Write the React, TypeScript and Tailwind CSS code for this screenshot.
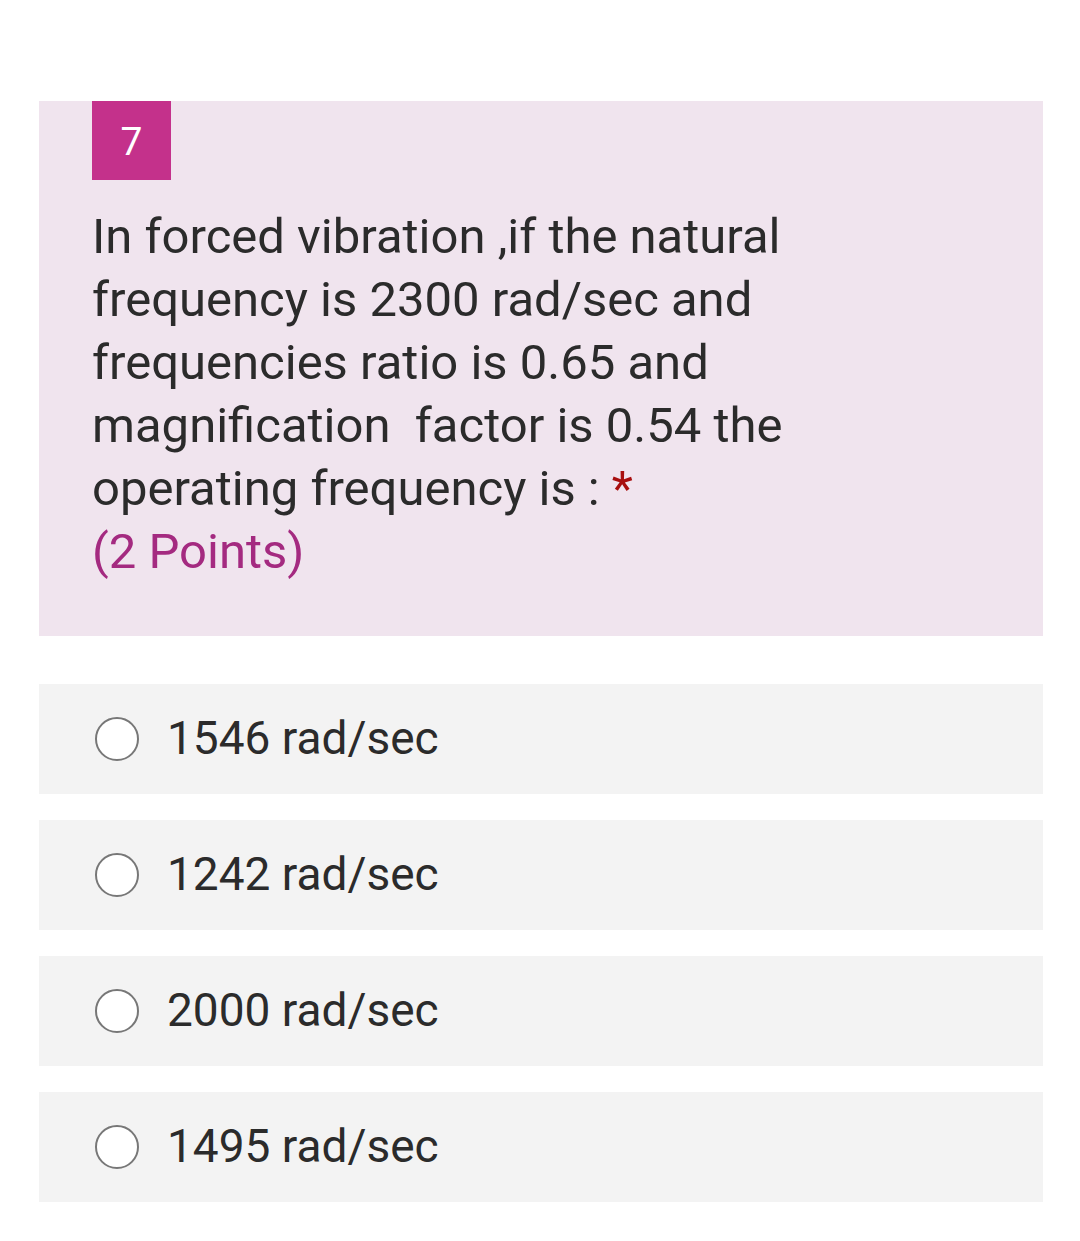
export default function App() {
  const options = ['1546 rad/sec', '1242 rad/sec', '2000 rad/sec', '1495 rad/sec'];
  return (
    <div className="min-h-[1241px] w-[1080px] bg-white pt-[101px] px-[39px] [font-family:Roboto,'Noto_Sans',sans-serif] text-[#333]">
      <div className="w-[1004px] bg-[#f0e4ee] pl-[53px] pb-[53px]">
        <div className="w-[79px] h-[79px] bg-[#c4318b] text-white text-[39px] pt-[4px] flex items-center justify-center">7</div>
        <div className="mt-[25px] text-[49px] leading-[63px] text-[#2b2b2b]">
          <div>In forced vibration ,if the natural</div>
          <div>frequency is 2300 rad/sec and</div>
          <div>frequencies ratio is 0.65 and</div>
          <div className="whitespace-pre">magnification  factor is 0.54 the</div>
          <div>
            operating frequency is : <span className="text-[#a80f0f]">*</span>
          </div>
          <div className="text-[#a42a80]">(2 Points)</div>
        </div>
      </div>
      <div className="mt-[48px] flex flex-col gap-[26px]">
        {options.map((o) => (
          <div key={o} className="w-[1004px] h-[110px] bg-[#f3f3f3] flex items-center pl-[56px]">
            <div className="w-[44px] h-[44px] rounded-full border-[2.5px] border-[#777] bg-white shrink-0" />
            <div className="ml-[28px] mb-[2px] text-[46px] text-[#2b2b2b] leading-none">{o}</div>
          </div>
        ))}
      </div>
    </div>
  );
}
